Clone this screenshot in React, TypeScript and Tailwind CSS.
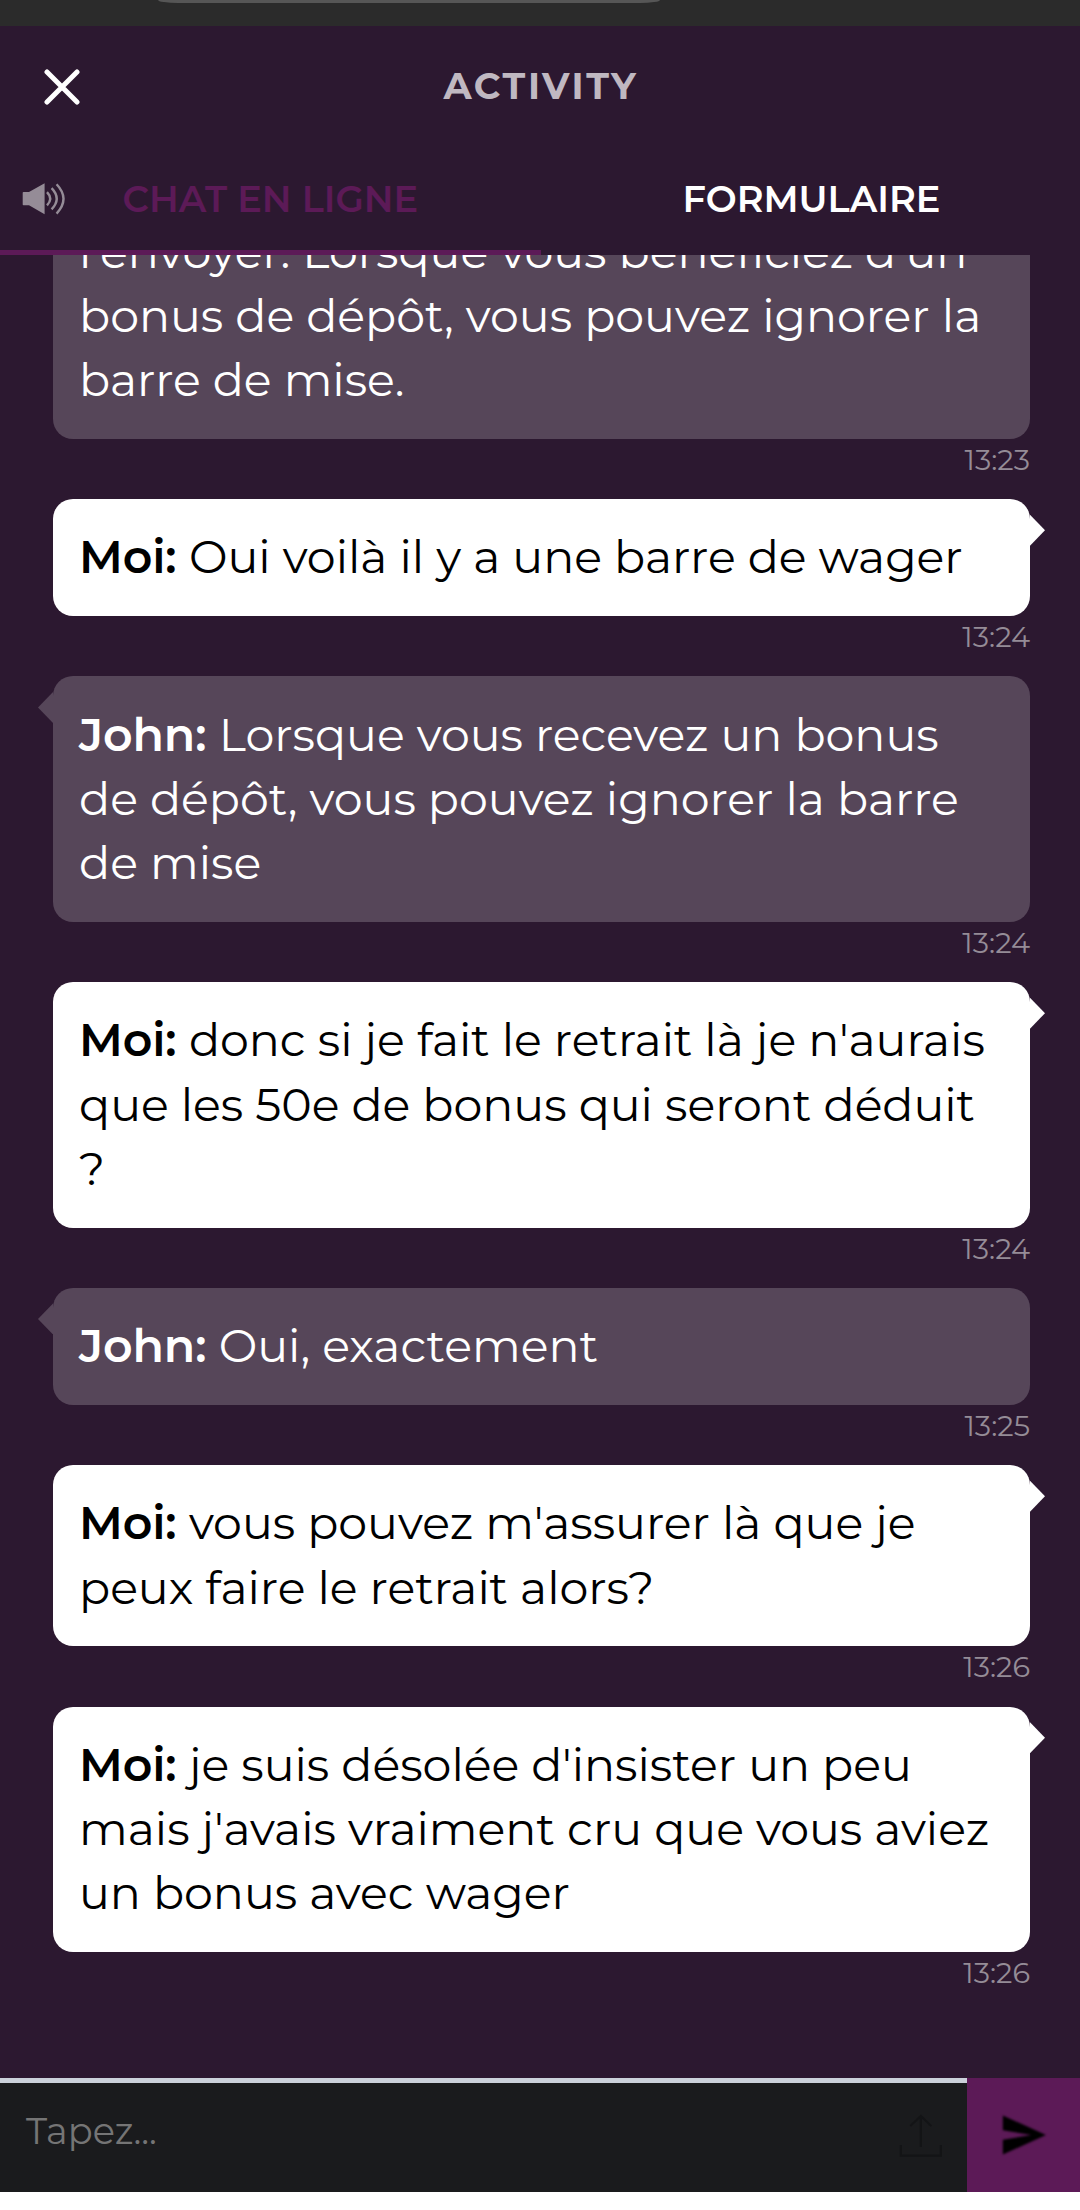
type Message = { author?: "Moi" | "John"; lines: string[]; time: string };

const messages: Message[] = [
  {
    lines: ["l'envoyer. Lorsque vous bénéficiez d'un", "bonus de dépôt, vous pouvez ignorer la", "barre de mise."],
    time: "13:23",
  },
  { author: "Moi", lines: ["Oui voilà il y a une barre de wager"], time: "13:24" },
  {
    author: "John",
    lines: ["Lorsque vous recevez un bonus", "de dépôt, vous pouvez ignorer la barre", "de mise"],
    time: "13:24",
  },
  {
    author: "Moi",
    lines: ["donc si je fait le retrait là je n'aurais", "que les 50e de bonus qui seront déduit", "?"],
    time: "13:24",
  },
  { author: "John", lines: ["Oui, exactement"], time: "13:25" },
  { author: "Moi", lines: ["vous pouvez m'assurer là que je", "peux faire le retrait alors?"], time: "13:26" },
  {
    author: "Moi",
    lines: ["je suis désolée d'insister un peu", "mais j'avais vraiment cru que vous aviez", "un bonus avec wager"],
    time: "13:26",
  },
];

function Bubble({ message }: { message: Message }) {
  const mine = message.author === "Moi";
  return (
    <div className="flex shrink-0 flex-col">
      <div
        className={
          mine
            ? "relative rounded-[20px] bg-white px-[26px] py-[26.25px] text-black"
            : "relative rounded-[20px] bg-[#564659] px-[26px] py-[26.25px] text-white"
        }
      >
        {message.author && (
          <span
            className={
              mine
                ? "absolute top-[15.5px] left-full h-[31px] w-[15px] bg-white [clip-path:polygon(0_0,100%_50%,0_100%)]"
                : "absolute top-[15.5px] right-full h-[31px] w-[15px] bg-[#564659] [clip-path:polygon(100%_0,0_50%,100%_100%)]"
            }
          />
        )}
        <div className="text-[45.9375px] leading-[64.3px] whitespace-nowrap">
          {message.lines.map((line, i) => (
            <p key={line}>
              {i === 0 && message.author && (
                <b className="font-semibold tracking-[-0.15px]">{message.author}: </b>
              )}
              {line}
            </p>
          ))}
        </div>
      </div>
      <time className="h-[60.4px] pt-[3px] text-right text-[28.875px] leading-[36px] text-[#958c97]">{message.time}</time>
    </div>
  );
}

function CloseIcon() {
  return (
    <svg className="size-[36px]" viewBox="0 0 36 36" fill="none" stroke="white" strokeWidth="5" strokeLinecap="round">
      <path d="M3 3 33 33M33 3 3 33" />
    </svg>
  );
}

function SpeakerIcon() {
  return (
    <svg className="h-[32px] w-[44px] text-[#958c97]" viewBox="0 0 44 32" fill="none">
      <path d="M1.5 9H7L22.6.3v31L7 22.2H1.5a.8.8 0 0 1-.8-.8V9.8a.8.8 0 0 1 .8-.8Z" fill="currentColor" />
      <g stroke="currentColor" strokeWidth="2.4">
        <path d="M25 9.2q6.4 6.6 0 13.2" />
        <path d="M29.6 5.2q10.2 10.6 0 21.2" />
        <path d="M34.6 1.2q13.8 14.6 0 29.4" />
      </g>
    </svg>
  );
}

export default function App() {
  return (
    <div className="flex h-[2210px] w-[1080px] flex-col overflow-hidden bg-white font-['Montserrat','Inter',sans-serif]">
      <div className="h-[26px] shrink-0 bg-[#2b2b2b]">
        <div className="ml-[158px] h-[3px] w-[502px] rounded-b-[20px_3px] bg-[#565656]" />
      </div>

      <header className="grid h-[124px] shrink-0 grid-cols-[160px_1fr_160px] items-center bg-[#2c1830] pb-[1px]">
        <button className="mb-[1px] ml-[43.5px] size-[36px]" aria-label="Fermer">
          <CloseIcon />
        </button>
        <h1 className="pb-[3px] pl-[2px] text-center text-[36.75px] leading-[46px] font-bold tracking-[2.625px] text-[#c0b8c1]">
          ACTIVITY
        </h1>
      </header>

      <nav className="grid h-[105px] shrink-0 grid-cols-[541px_539px] bg-[#2c1830] text-[36.75px] font-semibold">
        <div className="flex items-center border-b-5 border-[#5c1a57] pb-[2px] text-[#5c1a57]">
          <span className="ml-[22px] w-[100.5px]">
            <SpeakerIcon />
          </span>
          CHAT EN LIGNE
        </div>
        <div className="flex items-center justify-center border-b-5 border-transparent pb-[2px] pl-[2px] text-white">
          FORMULAIRE
        </div>
      </nav>

      <main className="flex h-[1823px] shrink-0 flex-col justify-end overflow-hidden bg-[#2c1830] pr-[50px] pb-[65.6px] pl-[53px]">
        {messages.map((message, i) => (
          <Bubble key={i} message={message} />
        ))}
      </main>

      <footer className="flex h-[114px] shrink-0">
        <div className="flex w-[967px] items-center justify-between border-t-5 border-[#cbd1da] bg-[#1a1b1d] pr-[24px] pl-[26px]">
          <span className="pb-[13px] text-[36.75px] text-[#757575]">Tapez...</span>
          <svg className="mb-[4px] size-[44px]" viewBox="0 0 44 44" fill="none" stroke="#131416" strokeWidth="2.2">
            <path d="M1.8 31v10.6h40V31M21.8 33V2.5M11.3 12 21.8 2l10.5 10" />
          </svg>
        </div>
        <div className="flex flex-1 items-center bg-[#5c1a57] pl-[35px]">
          <svg className="h-[40px] w-[45px] blur-[0.8px]" viewBox="0 0 46 41">
            <path d="M.8.5 45 20.5.8 40.5V25.3L30 20.5.8 15.7Z" fill="black" />
          </svg>
        </div>
      </footer>
    </div>
  );
}
